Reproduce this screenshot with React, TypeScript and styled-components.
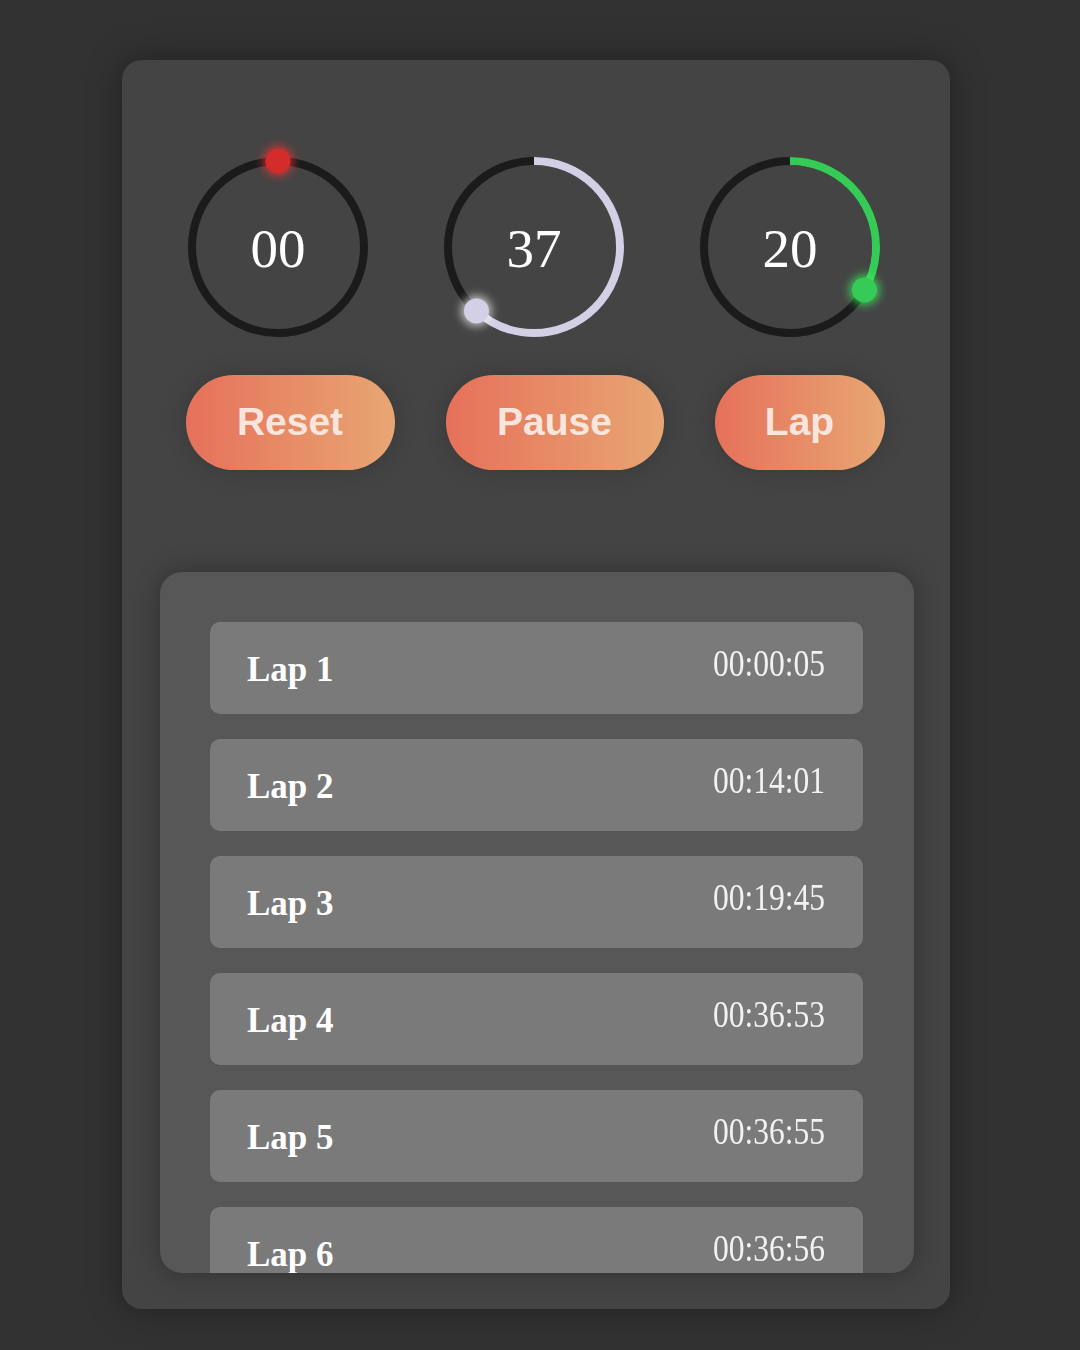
import { createGlobalStyle } from "styled-components";
import styled from "styled-components";

const GlobalStyle = createGlobalStyle`
  html, body {
    margin: 0;
    padding: 0;
    background: #323232;
  }
  body {
    font-family: "Liberation Serif", "Times New Roman", serif;
  }
`;

const Page = styled.div`
  width: 1080px;
  height: 1350px;
  box-sizing: border-box;
  padding: 60px 0 0 122px;
  overflow: hidden;
`;

const Card = styled.div`
  width: 828px;
  height: 1249px;
  box-sizing: border-box;
  padding-top: 87px;
  background: #444444;
  border-radius: 20px;
  box-shadow: 0 0 34px rgba(0, 0, 0, 0.35);
  display: flex;
  flex-direction: column;
`;

const DialRow = styled.div`
  display: flex;
  justify-content: center;
  gap: 56px;
  padding-right: 4px;
`;

const DialBox = styled.div`
  position: relative;
  width: 200px;
  height: 200px;
`;

const DialSvg = styled.svg`
  display: block;
  overflow: visible;
`;

const DialValue = styled.div`
  position: absolute;
  inset: 0;
  display: flex;
  align-items: center;
  justify-content: center;
  color: #ffffff;
  font-size: 55px;
  line-height: 1;
  padding-top: 2px;
`;

const ButtonRow = styled.div`
  margin-top: 28px;
  display: flex;
  justify-content: center;
  gap: 51px;
  padding-right: 2px;
`;

const PillButton = styled.button<{ $width: number }>`
  width: ${(p) => p.$width}px;
  height: 95px;
  border: none;
  border-radius: 48px;
  background: linear-gradient(90deg, #e6715a 0%, #e8a673 100%);
  box-shadow: 0 0 22px rgba(0, 0, 0, 0.18);
  color: #f8e6de;
  font-family: "Liberation Sans", Arial, sans-serif;
  font-weight: 700;
  font-size: 39px;
  display: flex;
  align-items: center;
  justify-content: center;
  padding: 0 0 2px;
  cursor: pointer;
`;

const LapPanel = styled.div`
  margin: 102px 36px 0 38px;
  height: 701px;
  border-radius: 22px;
  background: #575757;
  box-shadow: 0 0 26px rgba(0, 0, 0, 0.3);
  overflow: hidden;
`;

const LapList = styled.div`
  padding: 50px 51px 0 50px;
  display: flex;
  flex-direction: column;
  gap: 25px;
`;

const LapRow = styled.div`
  flex: 0 0 auto;
  height: 92px;
  box-sizing: border-box;
  padding: 0 38px 0 37px;
  border-radius: 10px;
  background: #7a7a7a;
  display: flex;
  align-items: center;
  justify-content: space-between;
`;

const LapName = styled.span`
  color: #ffffff;
  font-weight: 700;
  font-size: 35px;
  line-height: 1;
  padding-top: 2px;
`;

const LapTime = styled.span`
  display: inline-block;
  color: #f2f2f2;
  font-size: 38px;
  line-height: 1;
  transform: scaleX(0.83);
  transform-origin: right center;
  margin-top: -10px;
`;

type DialProps = { value: number; color: string; glow: string };

const Dial = ({ value, color, glow }: DialProps) => {
  const r = 86;
  const c = 2 * Math.PI * r;
  const frac = value / 60;
  const angle = frac * 2 * Math.PI;
  const kx = 100 + r * Math.sin(angle);
  const ky = 100 - r * Math.cos(angle);
  return (
    <DialBox>
      <DialSvg width={200} height={200} viewBox="0 0 200 200">
        <defs>
          <filter id={`glow-${value}`} x="-100%" y="-100%" width="300%" height="300%">
            <feGaussianBlur stdDeviation="5" />
          </filter>
        </defs>
        <circle cx={100} cy={100} r={r} fill="none" stroke="#1b1b1b" strokeWidth={8} />
        {frac > 0 && (
          <circle
            cx={100}
            cy={100}
            r={r}
            fill="none"
            stroke={color}
            strokeWidth={8}
            strokeDasharray={`${c * frac} ${c}`}
            transform="rotate(-90 100 100)"
          />
        )}
        <circle cx={kx} cy={ky} r={15} fill={glow} opacity={0.7} filter={`url(#glow-${value})`} />
        <circle cx={kx} cy={ky} r={12.5} fill={color} />
      </DialSvg>
      <DialValue>{String(value).padStart(2, "0")}</DialValue>
    </DialBox>
  );
};

const laps = [
  { name: "Lap 1", time: "00:00:05" },
  { name: "Lap 2", time: "00:14:01" },
  { name: "Lap 3", time: "00:19:45" },
  { name: "Lap 4", time: "00:36:53" },
  { name: "Lap 5", time: "00:36:55" },
  { name: "Lap 6", time: "00:36:56" },
];

export default function App() {
  return (
    <Page>
      <GlobalStyle />
      <Card>
        <DialRow>
          <Dial value={0} color="#d42b2b" glow="#ff3030" />
          <Dial value={37} color="#d3cfe4" glow="#ffffff" />
          <Dial value={20} color="#36cb56" glow="#3cff66" />
        </DialRow>
        <ButtonRow>
          <PillButton $width={209}>Reset</PillButton>
          <PillButton $width={218}>Pause</PillButton>
          <PillButton $width={170}>Lap</PillButton>
        </ButtonRow>
        <LapPanel>
          <LapList>
            {laps.map((lap) => (
              <LapRow key={lap.name}>
                <LapName>{lap.name}</LapName>
                <LapTime>{lap.time}</LapTime>
              </LapRow>
            ))}
          </LapList>
        </LapPanel>
      </Card>
    </Page>
  );
}
